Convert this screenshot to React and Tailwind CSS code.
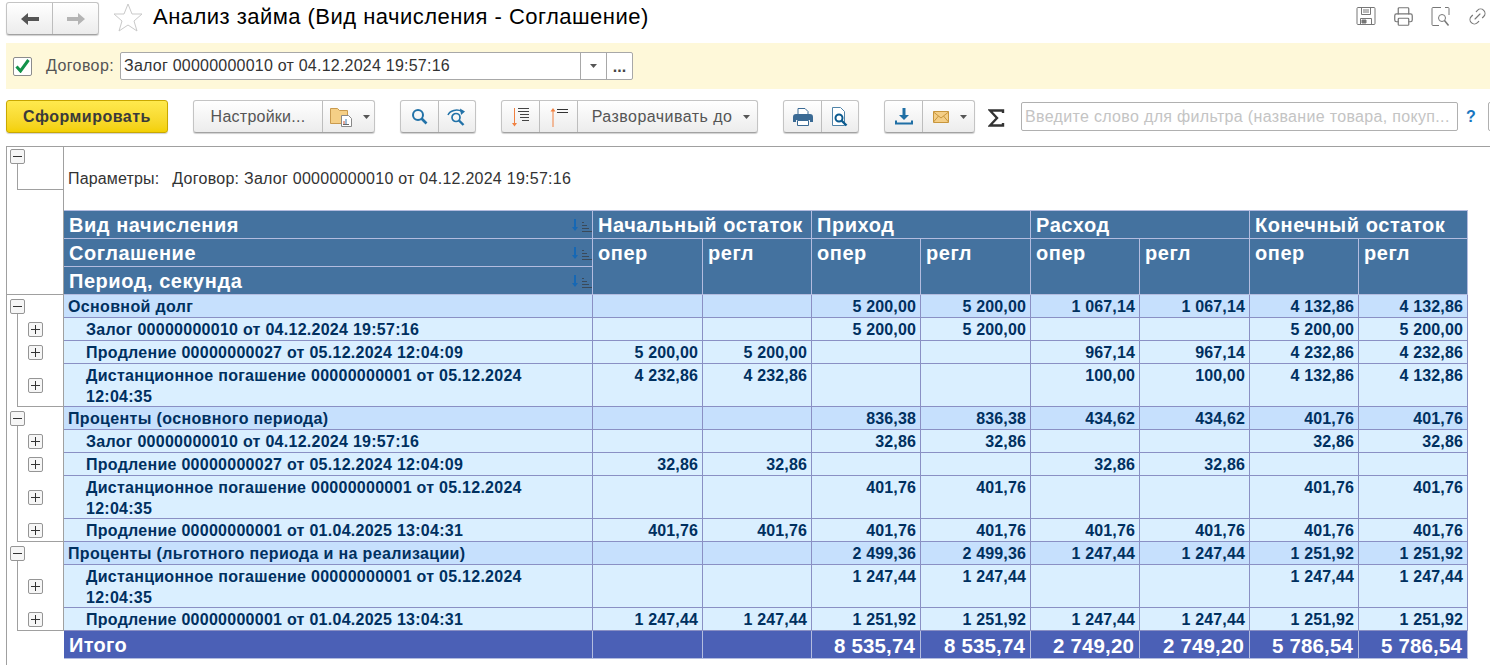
import React from "react";
import { Printer, Link2 } from "lucide-react";

const COLS = "grid w-[1404px] shrink-0 grid-cols-[529px_110px_109px_109px_110px_109px_110px_109px_109px]";

const GROUPS = [
  {
    name: "Основной долг",
    vals: ["", "", "5 200,00", "5 200,00", "1 067,14", "1 067,14", "4 132,86", "4 132,86"],
    rows: [
      { name: "Залог 00000000010 от 04.12.2024 19:57:16", vals: ["", "", "5 200,00", "5 200,00", "", "", "5 200,00", "5 200,00"] },
      { name: "Продление 00000000027 от 05.12.2024 12:04:09", vals: ["5 200,00", "5 200,00", "", "", "967,14", "967,14", "4 232,86", "4 232,86"] },
      { name: "Дистанционное погашение 00000000001 от 05.12.2024 12:04:35", tall: true, vals: ["4 232,86", "4 232,86", "", "", "100,00", "100,00", "4 132,86", "4 132,86"] },
    ],
  },
  {
    name: "Проценты (основного периода)",
    vals: ["", "", "836,38", "836,38", "434,62", "434,62", "401,76", "401,76"],
    rows: [
      { name: "Залог 00000000010 от 04.12.2024 19:57:16", vals: ["", "", "32,86", "32,86", "", "", "32,86", "32,86"] },
      { name: "Продление 00000000027 от 05.12.2024 12:04:09", vals: ["32,86", "32,86", "", "", "32,86", "32,86", "", ""] },
      { name: "Дистанционное погашение 00000000001 от 05.12.2024 12:04:35", tall: true, vals: ["", "", "401,76", "401,76", "", "", "401,76", "401,76"] },
      { name: "Продление 00000000001 от 01.04.2025 13:04:31", vals: ["401,76", "401,76", "401,76", "401,76", "401,76", "401,76", "401,76", "401,76"] },
    ],
  },
  {
    name: "Проценты (льготного периода и на реализации)",
    vals: ["", "", "2 499,36", "2 499,36", "1 247,44", "1 247,44", "1 251,92", "1 251,92"],
    rows: [
      { name: "Дистанционное погашение 00000000001 от 05.12.2024 12:04:35", tall: true, vals: ["", "", "1 247,44", "1 247,44", "", "", "1 247,44", "1 247,44"] },
      { name: "Продление 00000000001 от 01.04.2025 13:04:31", vals: ["1 247,44", "1 247,44", "1 251,92", "1 251,92", "1 247,44", "1 247,44", "1 251,92", "1 251,92"] },
    ],
  },
];

const TOTALS = ["", "", "8 535,74", "8 535,74", "2 749,20", "2 749,20", "5 786,54", "5 786,54"];

function Caret() {
  return (
    <svg width="7" height="4" viewBox="0 0 7 4" className="shrink-0">
      <path d="M0 0h7L3.5 4z" fill="#555" />
    </svg>
  );
}

function Group({ className = "", children }) {
  return (
    <div className={`flex h-[33px] shrink-0 rounded-[3px] border border-[#c4c4c4] border-b-[#a2a2a2] bg-linear-to-b from-white to-[#ececec] shadow-[0_1px_1px_#d0d0d0] ${className}`}>
      {children}
    </div>
  );
}

function Seg({ className = "", children }) {
  return <div className={`flex items-center justify-center border-r border-[#bdbdbd] last:border-r-0 ${className}`}>{children}</div>;
}

function TreeBox({ open }) {
  return (
    <svg width="15" height="15" viewBox="0 0 15 15" className="block shrink-0">
      <rect x="0.5" y="0.5" width="14" height="14" rx="1.5" fill="#f6f6f6" stroke="#959595" />
      <path d={open ? "M3 7.5h9" : "M3 7.5h9M7.5 3v9"} stroke="#333" strokeWidth="1" />
    </svg>
  );
}

function SortMark() {
  return (
    <svg width="20" height="13" viewBox="0 0 20 13" className="shrink-0 self-center">
      <path d="M3 0v9" stroke="#1668b5" strokeWidth="2" />
      <path d="M0 8h6l-3 4z" fill="#1668b5" />
      <path d="M10 3.5h2M10 6.5h5M10 9.5h7M10 12.5h10" stroke="#3a4a5a" strokeWidth="1" />
    </svg>
  );
}

function HeadCell({ className = "", children }) {
  return (
    <div className={`border-r border-b border-[#b3bcdf] px-[5px] pt-[1px] text-[20px] leading-[26px] font-bold tracking-[0.55px] text-white ${className}`}>
      {children}
    </div>
  );
}

function Cells({ vals, className = "" }) {
  return vals.map((v, i) => (
    <div key={i} className={`border-r pt-[1px] text-right tracking-[0.15px] ${className}`}>
      {v}
    </div>
  ));
}

function GroupRow({ group }) {
  return (
    <>
      <div className="flex h-[23px]">
        <div className="flex w-[57px] shrink-0 flex-col border-r border-[#a0a0a0] pl-[3px] pt-[4px]">
          <TreeBox open />
          <div className="ml-[7px] flex-1 border-l border-[#a0a0a0]" />
        </div>
        <div className={`${COLS} border-b border-[#8a90c4] bg-[#c6e0fd] text-[16px] leading-[21px] font-bold text-[#00305f]`}>
          <div className="border-r border-[#8a90c4] pl-[4px] pt-[1px] tracking-[0.35px]">{group.name}</div>
          <Cells vals={group.vals} className="border-[#8a90c4] pr-[4px]" />
        </div>
      </div>
      {group.rows.map((row, i) => (
        <div key={i} className={`flex ${row.tall ? "h-[43px]" : "h-[23px]"}`}>
          <div className="w-[57px] shrink-0 border-r border-[#a0a0a0] pl-[10px]">
            <div className={`flex h-full items-center border-l border-[#a0a0a0] pl-[10px] ${i === group.rows.length - 1 ? "border-b" : ""}`}>
              <TreeBox />
            </div>
          </div>
          <div className={`${COLS} border-b border-[#8a90c4] bg-[#daefff] text-[16px] leading-[21px] font-bold text-[#00305f]`}>
            <div className="border-r border-[#8a90c4] pl-[22px] pr-[20px] pt-[1px] tracking-[0.27px]">{row.name}</div>
            <Cells vals={row.vals} className="border-[#8a90c4] pr-[4px]" />
          </div>
        </div>
      ))}
    </>
  );
}

export default function App() {
  return (
    <div className="flex h-[665px] w-[1490px] flex-col overflow-hidden bg-white text-[#333] [font-family:'Liberation_Sans',Arial,sans-serif]">
      {/* title row */}
      <div className="flex h-[43px] shrink-0 pl-[6px] pt-[2px]">
        <Group className="h-[31px]">
          <Seg className="w-[46px]">
            <svg width="18" height="12" viewBox="0 0 18 12"><path d="M0 6l7-6v4h11v4H7v4z" fill="#555" /></svg>
          </Seg>
          <Seg className="w-[45px]">
            <svg width="18" height="12" viewBox="0 0 18 12"><path d="M18 6l-7-6v4H0v4h11v4z" fill="#b4b4b4" /></svg>
          </Seg>
        </Group>
        <svg width="30" height="29" viewBox="0 0 30 29" className="ml-[14px] mt-[1px]">
          <path d="M15 1l4 10h10l-8 7 3 10-9-6-9 6 3-10-8-7h10z" fill="#fff" stroke="#c9c9c9" />
        </svg>
        <div className="ml-[10px] text-[22px] leading-[30px] tracking-[0.47px] text-black">Анализ займа (Вид начисления - Соглашение)</div>
        <div className="ml-auto mr-[2px] flex gap-[17px] pt-[5px] text-[#777]">
          <svg width="20" height="18" viewBox="0 0 20 18" fill="none" stroke="#777">
            <path d="M2 .5h16a1 1 0 0 1 1 1v15a1 1 0 0 1-1 1H2a1 1 0 0 1-1-1v-15a1 1 0 0 1 1-1z" />
            <path d="M5.500 .5v7h9v-7M7 3h6M7 5h6" />
            <path d="M4.500 17.500v-6h11v6" />
            <path d="M6 13h4v3H6z" fill="#777" />
          </svg>
          <Printer size={21} strokeWidth={1.4} className="-mt-[1px]" />
          <svg width="19" height="19" viewBox="0 0 19 19" fill="none" stroke="#777">
            <path d="M10 .5H2a1 1 0 0 0-1 1v16a1 1 0 0 0 1 1h6M14 .5h3a1 1 0 0 1 1 1V8" />
            <circle cx="11" cy="11" r="3.500" />
            <path d="M13.500 13.500l4 5" strokeWidth="1.500" />
          </svg>
          <Link2 size={21} strokeWidth={1.3} className="-mt-[1px] -rotate-45" />
        </div>
      </div>

      {/* filter bar */}
      <div className="ml-[6px] flex h-[46px] shrink-0 items-center bg-[#fef8d9] pl-[7px]">
        <div className="flex h-[19px] w-[19px] items-center justify-center rounded-[2px] border border-[#8c8c8c] bg-white">
          <svg width="15" height="14" viewBox="0 0 15 14"><path d="M1.500 7.500l4 4.500 8-11" fill="none" stroke="#12924a" strokeWidth="3" /></svg>
        </div>
        <div className="ml-[14px] w-[67px] text-[16px] tracking-[0.4px] whitespace-nowrap text-[#555]">Договор:</div>
        <div className="ml-[7px] flex h-[28px] w-[513px] rounded-[2px] border border-[#a8a8a8] bg-white">
          <div className="flex-1 pl-[3px] text-[16px] leading-[26px] tracking-[0.23px] text-[#333]">Залог 00000000010 от 04.12.2024 19:57:16</div>
          <div className="flex w-[26px] items-center justify-center border-l border-[#a8a8a8]"><Caret /></div>
          <div className="flex w-[26px] justify-center border-l border-[#a8a8a8] text-[16px] leading-[28px] font-bold text-[#444]">...</div>
        </div>
      </div>

      {/* command bar */}
      <div className="mt-[11px] flex h-[33px] shrink-0 items-center pl-[6px]">
        <div className="flex h-[33px] w-[162px] shrink-0 items-center justify-center rounded-[3px] border border-[#c9a800] bg-linear-to-b from-[#ffe94d] to-[#f3d000] text-[16px] font-bold tracking-[0.5px] text-[#3a3a3a] shadow-[0_1px_1px_#d0d0d0]">
          Сформировать
        </div>
        <Group className="ml-[25px] w-[182px] text-[16px] tracking-[0.25px] text-[#555]">
          <Seg className="w-[129px]">Настройки...</Seg>
          <Seg className="flex-1 gap-[9px] pl-[2px]">
            <svg width="24" height="20" viewBox="0 0 24 20">
              <path d="M0.500 4V1.500h7l2 2h8v13h-17z" fill="#f5cf86" stroke="#c99a4e" />
              <path d="M11.500 8.500h7l3 3v8h-10z" fill="#fff" stroke="#888" />
              <path d="M14 17v-3" stroke="#d05030" /><path d="M16 17v-5" stroke="#3a7ab0" /><path d="M13 17.500h6" stroke="#666" />
            </svg>
            <Caret />
          </Seg>
        </Group>
        <Group className="ml-[25px] w-[76px]">
          <Seg className="w-[38px]">
            <svg width="17" height="17" viewBox="0 0 17 17" fill="none" stroke="#2272a8"><circle cx="7" cy="7" r="5" strokeWidth="2" /><path d="M10.500 10.500l5 5" strokeWidth="2.600" /></svg>
          </Seg>
          <Seg className="flex-1">
            <svg width="20" height="18" viewBox="0 0 20 18" fill="none" stroke="#2272a8">
              <path d="M1 7a9 7 0 0 1 14-3.500" strokeWidth="1.500" />
              <path d="M13 0.500l5 3-4 3.500z" fill="#2272a8" stroke="none" />
              <circle cx="9" cy="9.500" r="4" strokeWidth="1.700" />
              <path d="M12 12.500l4.500 4.500" strokeWidth="2.400" />
            </svg>
          </Seg>
        </Group>
        <Group className="ml-[25px] w-[257px] text-[16px] tracking-[0.45px] text-[#555]">
          <Seg className="w-[38px]">
            <svg width="18" height="20" viewBox="0 0 18 20" fill="none">
              <path d="M2.500 1v17" stroke="#f08040" /><path d="M0 16h5l-2.500 3.500z" fill="#f08040" />
              <path d="M6 1.500h11M6 4.500h11M8 7.500h9M8 10.500h9M10 13.500h7" stroke="#444" />
            </svg>
          </Seg>
          <Seg className="w-[38px]">
            <svg width="18" height="20" viewBox="0 0 18 20" fill="none">
              <path d="M3 3v17" stroke="#f08040" /><path d="M0.500 4.500h5L3 1z" fill="#f08040" />
              <path d="M7 2.500h11M7 5.500h11" stroke="#333" />
            </svg>
          </Seg>
          <Seg className="flex-1 gap-[11px] pl-[7px]">Разворачивать до <Caret /></Seg>
        </Group>
        <Group className="ml-[25px] w-[76px]">
          <Seg className="w-[38px]">
            <svg width="20" height="18" viewBox="0 0 20 18">
              <path d="M5 0.500h7l3 3V7H5z" fill="#fff" stroke="#3a6a94" />
              <path d="M0 9a3 3 0 0 1 3-3h14a3 3 0 0 1 3 3v5h-3v-2H3v2H0z" fill="#3a6a94" />
              <path d="M4.500 12.500h11v5h-11z" fill="#fff" stroke="#3a6a94" />
            </svg>
          </Seg>
          <Seg className="flex-1">
            <svg width="18" height="20" viewBox="0 0 18 20" fill="none">
              <path d="M1.500 0.500h8l4 4V18.500h-12z" fill="#fff" stroke="#4f83a8" />
              <circle cx="8" cy="11" r="3.500" stroke="#0b5a8f" strokeWidth="2" />
              <path d="M10.500 13.500l5 5" stroke="#0b5a8f" strokeWidth="2.400" />
            </svg>
          </Seg>
        </Group>
        <Group className="ml-[25px] w-[91px]">
          <Seg className="w-[38px]">
            <svg width="18" height="17" viewBox="0 0 18 17" fill="none">
              <path d="M9 0v9" stroke="#1f6fa5" strokeWidth="3" /><path d="M4 7h10l-5 5z" fill="#1f6fa5" />
              <path d="M1 12.500v3h16v-3" stroke="#1f6fa5" strokeWidth="2" />
            </svg>
          </Seg>
          <Seg className="flex-1 gap-[11px] pl-[3px]">
            <svg width="16" height="12" viewBox="0 0 16 12"><path d="M0.500 0.500h15v11H0.500z" fill="#f4ce86" stroke="#c8963c" /><path d="M0.500 1l7.500 6 7.500-6M0.500 11l5-6M15.500 11l-5-6" fill="none" stroke="#c8963c" /></svg>
            <Caret />
          </Seg>
        </Group>
        <svg width="17" height="18" viewBox="0 0 17 18" className="ml-[13px] mt-[3px] shrink-0">
          <path d="M15 4V1.500H2l7 7.500-7 7.500h13V14" fill="none" stroke="#333" strokeWidth="2.400" />
        </svg>
        <div className="ml-[16px] h-[29px] w-[437px] shrink-0 overflow-hidden rounded-[2px] border border-[#b0b0b0] bg-white pl-[3px] text-[16px] leading-[27px] tracking-[0.33px] whitespace-nowrap text-[#c4c4c4]">
          Введите слово для фильтра (название товара, покуп...
        </div>
        <div className="ml-[8px] w-[9px] shrink-0 text-[16px] font-bold text-[#1976c0]">?</div>
        <div className="ml-[13px] h-[29px] w-[20px] shrink-0 rounded-[2px] border border-[#b0b0b0]" />
      </div>

      {/* report */}
      <div className="ml-[6px] mt-[13px] flex-1 border-l border-t border-[#a0a0a0]">
        <div className="flex">
          <div className="w-[57px] shrink-0 border-r border-b border-[#a0a0a0] pl-[3px] pt-[2px]">
            <TreeBox open />
            <div className="ml-[7px] h-[26px] border-l border-b border-[#a0a0a0]" />
          </div>
          <div>
            <div className="flex h-[63px] items-center pl-[4px] text-[16px] text-[#333]">
              <span className="mr-[13px] tracking-[0.16px]">Параметры:</span>
              <span className="tracking-[0.26px]">Договор: Залог 00000000010 от 04.12.2024 19:57:16</span>
            </div>
            <div className={`${COLS} grid-rows-[28px_28px_28px] border-t border-[#b3bcdf] bg-[#44729f]`}>
              <HeadCell className="flex items-start justify-between pr-0">Вид начисления <SortMark /></HeadCell>
              <HeadCell className="col-span-2">Начальный остаток</HeadCell>
              <HeadCell className="col-span-2">Приход</HeadCell>
              <HeadCell className="col-span-2">Расход</HeadCell>
              <HeadCell className="col-span-2">Конечный остаток</HeadCell>
              <HeadCell className="flex items-start justify-between pr-0">Соглашение <SortMark /></HeadCell>
              {["опер", "регл", "опер", "регл", "опер", "регл", "опер", "регл"].map((t, i) => (
                <HeadCell key={i} className="row-span-2">{t}</HeadCell>
              ))}
              <HeadCell className="flex items-start justify-between pr-0">Период, секунда <SortMark /></HeadCell>
            </div>
          </div>
        </div>

        {GROUPS.map((g) => (
          <GroupRow key={g.name} group={g} />
        ))}

        <div className="flex h-[28px]">
          <div className="w-[57px] shrink-0" />
          <div className={`${COLS} border-b border-[#b3bcdf] bg-[#4b60b6] text-[20.5px] leading-[27px] font-bold tracking-[0.6px] text-white`}>
            <div className="border-r border-[#b3bcdf] pl-[5px] pt-[1px] text-[20px] tracking-[0.3px]">Итого</div>
            <Cells vals={TOTALS} className="border-[#b3bcdf] pr-[5px] tracking-[0.6px]" />
          </div>
        </div>
      </div>
    </div>
  );
}
